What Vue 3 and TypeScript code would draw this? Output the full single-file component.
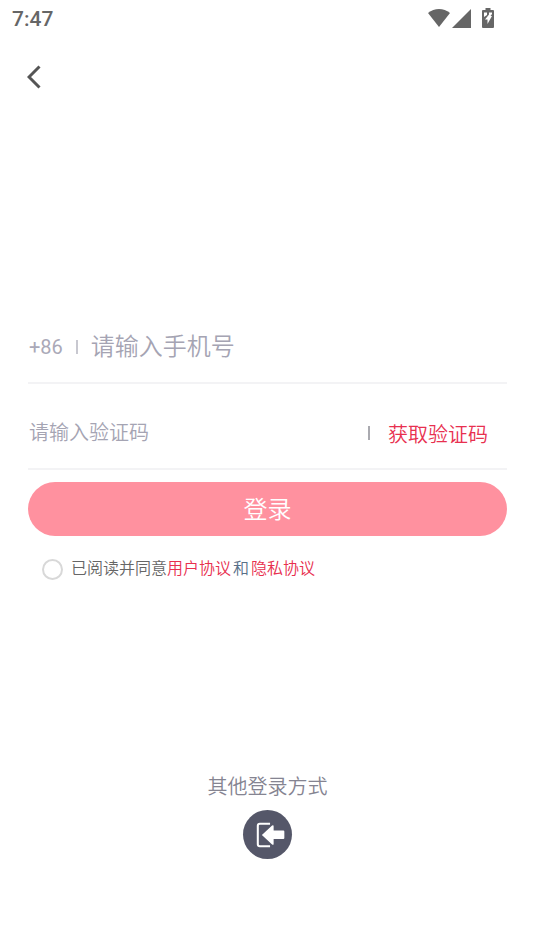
<script setup lang="ts">
import { ref } from 'vue'

const phone = ref('')
const code = ref('')
const agreed = ref(false)
</script>

<template>
  <div class="screen">
    <header class="status">
      <span class="time">7:47</span>
      <div class="indicators">
        <svg class="wifi" viewBox="0 0 22 18" aria-hidden="true">
          <path d="M0 4Q5 0 11 0T22 4L11 18Z" />
        </svg>
        <svg class="signal" viewBox="0 0 18 18" aria-hidden="true">
          <path d="M18 0V18H0Z" />
        </svg>
        <svg class="battery" viewBox="0 0 12 20" aria-hidden="true">
          <path d="M3.500 0h5v2H11a1 1 0 0 1 1 1v16a1 1 0 0 1-1 1H1a1 1 0 0 1-1-1V3a1 1 0 0 1 1-1h2.500Z" />
          <path class="bolt" d="M2 4.500H5V7L2 9ZM7 4.500H10V6L8.500 8H10L5.500 16V11.500H3L7 6.500Z" />
        </svg>
      </div>
    </header>

    <nav class="nav">
      <button class="back" type="button" aria-label="返回">
        <svg viewBox="0 0 14 24" aria-hidden="true">
          <path d="M12.500 1.500L2 12L12.500 22.500" />
        </svg>
      </button>
    </nav>

    <main>
      <form class="form" @submit.prevent>
        <div class="field">
          <label class="prefix" for="phone">+86</label>
          <span class="divider"></span>
          <input id="phone" v-model="phone" class="phone" type="tel" placeholder="请输入手机号" />
        </div>
        <div class="field">
          <input id="code" v-model="code" class="code" type="text" placeholder="请输入验证码" aria-label="验证码" />
          <span class="divider dark"></span>
          <button class="send" type="button">获取验证码</button>
        </div>
        <button class="login" type="submit">登录</button>
        <div class="agreement">
          <input id="agree" v-model="agreed" type="checkbox" />
          <p>
            <label for="agree">已阅读并同意</label><a href="#terms">用户协议</a><span class="and">和</span><a href="#privacy">隐私协议</a>
          </p>
        </div>
      </form>

      <section class="other">
        <h2>其他登录方式</h2>
        <button class="alt" type="button" aria-label="其他登录方式">
          <svg viewBox="0 0 48 48" aria-hidden="true">
            <path class="door" d="M26.500 13.500H16.500Q14.500 13.500 14.500 15.500V33.500Q14.500 35.500 16.500 35.500H26.500" />
            <path class="arrow" d="M18.500 24.500L28.500 15.200Q30 14.200 30 16V20H39.500Q40.500 20 40.500 21V27.500Q40.500 28.500 39.500 28.500H30V33Q30 34.800 28.500 33.800Z" />
          </svg>
        </button>
      </section>
    </main>
  </div>
</template>

<style>
body {
  margin: 0;
  background: #fff;
}
</style>

<style scoped>
.screen {
  min-height: 100vh;
  background: #fff;
  font-family: Roboto, "Noto Sans CJK SC", sans-serif;
  font-weight: 350;
  color: #666;
}

button {
  padding: 0;
  border: 0;
  background: none;
  font: inherit;
  cursor: pointer;
}

svg {
  display: block;
}

.status {
  display: flex;
  align-items: center;
  justify-content: space-between;
  height: 36px;
  padding: 0 41px 0 12px;
}

.time {
  padding-top: 2px;
  font-size: 21px;
  font-weight: 500;
  line-height: 24px;
  color: #666;
}

.indicators {
  display: flex;
  align-items: center;
  fill: #666;
}

.wifi {
  width: 22px;
  height: 18px;
  margin-right: 2px;
}

.signal {
  width: 19px;
  height: 19px;
  margin-right: 11px;
}

.battery {
  width: 12px;
  height: 20px;
}

.bolt {
  fill: #fff;
}

.nav {
  padding: 24px 27px 0;
}

.back {
  display: block;
  padding: 5px 0;
}

.back svg {
  width: 14px;
  height: 24px;
  fill: none;
  stroke: #555;
  stroke-width: 3;
}

.form {
  padding: 216px 28px 0;
}

.field {
  display: flex;
  align-items: center;
  height: 70px;
  margin-bottom: 12px;
  padding: 2px 0 0 1px;
  border-bottom: 2px solid #f3f3f5;
}

.prefix {
  font-size: 20px;
  font-weight: 400;
  color: #aaa9b8;
}

.divider {
  flex: none;
  width: 2px;
  height: 14px;
  margin: 0 13px;
  background: #c8c8d0;
}

.divider.dark {
  margin: 0 18px;
  background: #aaaab0;
}

.field input {
  flex: 1;
  min-width: 0;
  padding: 0;
  border: 0;
  outline: 0;
  background: none;
  font-family: inherit;
  font-weight: inherit;
  color: #555;
}

.field input::placeholder {
  color: #a5a4b3;
  opacity: 1;
}

.field .phone {
  font-size: 24px;
}

.field .code {
  font-size: 20px;
}

.send {
  margin-right: 19px;
  font-size: 20px;
  color: #e8304f;
}

.login {
  display: block;
  width: 100%;
  height: 54px;
  padding-bottom: 3px;
  border-radius: 27px;
  background: #ff919f;
  font-size: 24px;
  color: #fff;
}

.agreement {
  display: flex;
  align-items: center;
  gap: 8px;
  padding: 21px 14px 0;
}

.agreement input {
  flex: none;
  appearance: none;
  width: 21px;
  height: 21px;
  margin: 0;
  border: 2px solid #d8d8d8;
  border-radius: 50%;
}

.agreement input:checked {
  background: #e8304f;
}

.agreement p {
  margin: 0;
  font-size: 16px;
  line-height: 24px;
}

a {
  color: #e8304f;
  text-decoration: none;
}

.and {
  margin: 0 2px;
  color: #587088;
}

.other {
  display: flex;
  flex-direction: column;
  align-items: center;
  gap: 8px;
  padding: 191px 28px 0;
}

h2 {
  margin: 0;
  font-size: 20px;
  font-weight: inherit;
  line-height: 30px;
  color: #858491;
}

.alt {
  width: 49px;
  height: 49px;
  border-radius: 50%;
  background: #555769;
}

.door {
  fill: none;
  stroke: #fff;
  stroke-width: 2;
}

.arrow {
  fill: #fff;
}
</style>
